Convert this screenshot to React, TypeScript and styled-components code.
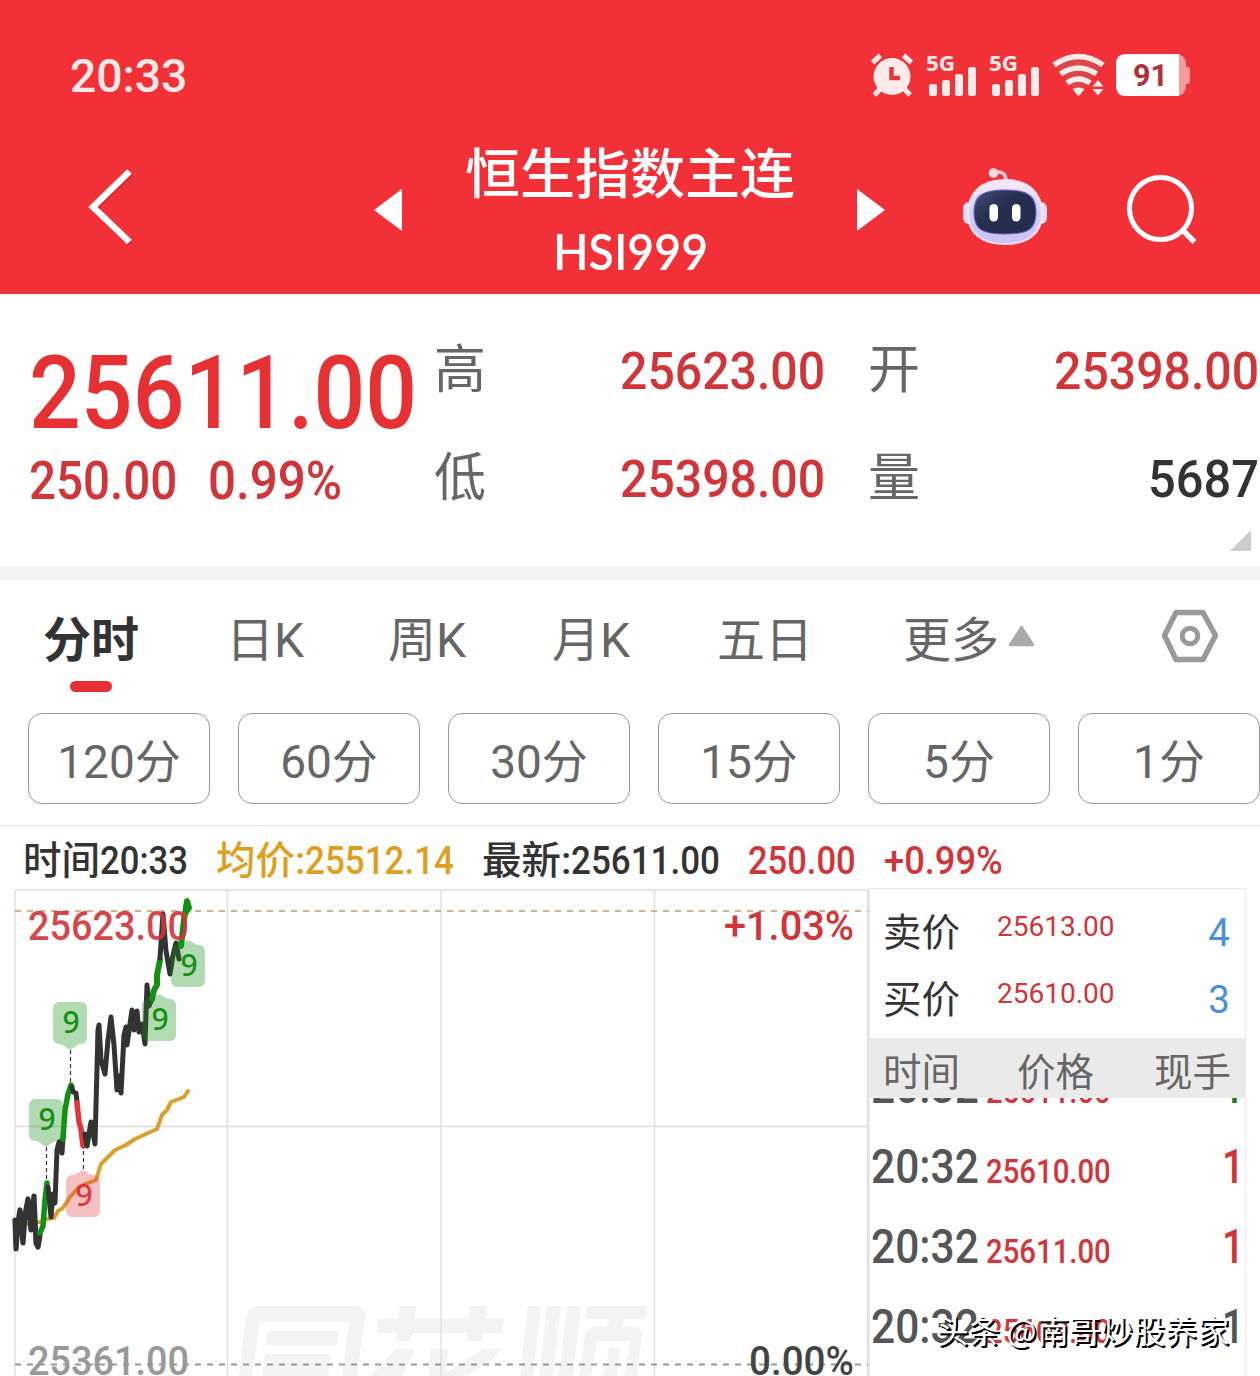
import React, { useLayoutEffect, useRef, useState } from 'react';
import styled, { createGlobalStyle } from 'styled-components';

const RED = '#e53134';
const DEEP_RED = '#d0353a';

const Global = createGlobalStyle`
  * { box-sizing: border-box; }
  body { margin: 0; background: #fff; overflow: hidden; }
`;

const Screen = styled.div`
  width: 1260px;
  height: 1376px;
  overflow: hidden;
  display: flex;
  flex-direction: column;
  background: #fefefe;
  color: #333;
  font-family: Roboto, 'Noto Sans CJK SC', sans-serif;
`;

/* Text squeezed horizontally to a fixed width, for the narrow quote digits. */
const FitBox = styled.span<{ $w: number; $size: number; $color?: string; $weight?: number; $face?: string }>`
  display: block;
  flex: none;
  width: ${p => p.$w}px;
  height: ${p => p.$size}px;
  line-height: ${p => p.$size}px;
  font-size: ${p => p.$size}px;
  font-weight: ${p => p.$weight ?? 500};
  color: ${p => p.$color ?? 'inherit'};
  ${p => p.$face && `font-family: ${p.$face}, 'Noto Sans CJK SC', sans-serif;`}
`;
const FitInner = styled.span`
  display: inline-block;
  white-space: pre;
  transform-origin: 0 50%;
`;

type FitProps = { w: number; size: number; color?: string; weight?: number; face?: string; children: string };
function Fit({ w, size, color, weight, face, children }: FitProps) {
  const ref = useRef<HTMLSpanElement>(null);
  const [scale, setScale] = useState(1);
  useLayoutEffect(() => {
    if (ref.current) setScale(w / ref.current.offsetWidth);
  }, [w, size, children]);
  return (
    <FitBox $w={w} $size={size} $color={color} $weight={weight} $face={face}>
      <FitInner ref={ref} style={{ transform: `scaleX(${scale})` }}>{children}</FitInner>
    </FitBox>
  );
}

/* ---------- header ---------- */
const Header = styled.header`
  height: 294px;
  flex: none;
  background: #f23037;
  color: #fff;
`;
const StatusBar = styled.div`
  height: 120px;
  padding: 30px 69px 0 70px;
  display: flex;
  align-items: center;
  justify-content: space-between;
`;
const StatusIcons = styled.svg`
  width: 322px;
  height: 50px;
`;
const NavBar = styled.div`
  height: 174px;
  display: grid;
  grid-template-columns: 374px 30px 452px 30px 75px 88px 76px 72px;
  align-items: start;
`;
const NavIcon = styled.svg<{ $w: number; $h: number; $top: number; $left?: number }>`
  display: block;
  width: ${p => p.$w}px;
  height: ${p => p.$h}px;
  margin: ${p => p.$top}px 0 0 ${p => p.$left ?? 0}px;
`;
const Title = styled.div`
  display: flex;
  flex-direction: column;
  align-items: center;
  padding-top: 29px;
  gap: 23px;
`;

/* ---------- quote summary ---------- */
const Summary = styled.section`
  height: 286px;
  flex: none;
  border-bottom: 14px solid #f4f4f4;
  display: grid;
  grid-template-columns: 434px 434px 392px;
  position: relative;
`;
const PriceCol = styled.div`
  padding: 48px 0 0 29px;
  display: flex;
  flex-direction: column;
`;
const ChangeRow = styled.div`
  display: flex;
  gap: 31px;
  margin-top: 11px;
`;
const StatCol = styled.div<{ $right: number }>`
  display: flex;
  flex-direction: column;
  gap: 56px;
  padding: 51px ${p => p.$right}px 0 0;
`;
const StatRow = styled.div`
  height: 52px;
  display: flex;
  align-items: center;
  justify-content: space-between;
  color: #666;
  font-size: 52px;
  line-height: 52px;
`;
const CornerMark = styled.i`
  position: absolute;
  right: 9px;
  bottom: 15px;
  border-left: 21px solid transparent;
  border-bottom: 21px solid #ccc;
`;

/* ---------- tabs ---------- */
const Tabs = styled.nav`
  height: 133px;
  flex: none;
  display: grid;
  grid-template-columns: 183px 162px 164px 165px 186px 245px 112px;
  padding: 36px 0 0 43px;
  color: #666;
  font-size: 48px;
  line-height: 50px;
`;
const Tab = styled.div<{ $active?: boolean }>`
  display: flex;
  font-weight: ${p => (p.$active ? 700 : 400)};
  color: ${p => (p.$active ? '#333' : '#666')};
  flex-direction: column;
  &::after {
    content: '';
    display: ${p => (p.$active ? 'block' : 'none')};
    width: 42px;
    height: 11px;
    margin: 15px 0 0 27px;
    border-radius: 6px;
    background: ${RED};
  }
`;
const MoreTab = styled.div`
  display: flex;
  gap: 9px;
`;
const Caret = styled.svg`
  width: 27px;
  height: 22px;
  margin-top: 9px;
`;
const Gear = styled.svg`
  width: 58px;
  height: 56px;
  margin: -8px 0 0 13px;
`;

const Periods = styled.div`
  height: 113px;
  flex: none;
  border-bottom: 1.5px solid #e6e6e6;
  padding-left: 28px;
  display: flex;
  gap: 28px;
`;
const Period = styled.div`
  flex: none;
  width: 182px;
  height: 91px;
  border: 1.3px solid #999;
  border-radius: 14px;
  text-align: center;
  line-height: 97px;
  color: #666;
  font-size: 46px;
`;

/* ---------- chart info ---------- */
const InfoRow = styled.div`
  height: 62px;
  flex: none;
  padding: 16px 0 0 23px;
  display: flex;
`;
const Gap = styled.span<{ $w: number }>`
  width: ${p => p.$w}px;
`;

const Body = styled.div`
  flex: 1;
  display: flex;
  min-height: 0;
`;
const Chart = styled.svg`
  flex: none;
  width: 868px;
  height: 488px;
  font-family: Roboto, sans-serif;
`;

/* ---------- order panel ---------- */
const Panel = styled.aside`
  width: 378px;
  flex: none;
  display: flex;
  flex-direction: column;
  border: solid #e9e9e9;
  border-width: 1px 1px 0 2px;
  position: relative;
`;
const Quotes = styled.div`
  height: 149px;
  flex: none;
  padding-top: 10px;
`;
const QuoteRow = styled.div`
  height: 67px;
  display: grid;
  grid-template-columns: 114px 1fr auto;
  padding: 0 15px 0 13px;
  line-height: 67px;
  font-size: 38.5px;
  color: #333;
`;
const QuotePrice = styled.span`
  font-size: 28px;
  line-height: 55px;
  color: ${DEEP_RED};
`;
const QuoteQty = styled.span`
  color: #4a90d9;
`;
const TradeHead = styled.div`
  height: 60px;
  flex: none;
  background: #eaeaea;
  color: #666;
  font-size: 38.5px;
  line-height: 69px;
  padding: 0 13px;
  display: grid;
  grid-template-columns: 134px 137px auto;
`;
const Trades = styled.div`
  flex: 1;
  overflow: hidden;
  display: flex;
  flex-direction: column;
  min-height: 0;
`;
const TradeRow = styled.div<{ $clipped?: boolean }>`
  height: 80px;
  flex: none;
  margin-top: ${p => (p.$clipped ? -51 : 0)}px;
  display: flex;
  align-items: flex-end;
  padding: 0 1px 16px 1px;
`;
const TradePrice = styled.span`
  margin: 0 auto 3px 7px;
`;
const Credit = styled.div`
  position: absolute;
  left: 67px;
  top: 421px;
  display: flex;
  align-items: center;
  gap: 7px;
  white-space: nowrap;
  font-family: 'Noto Sans CJK SC', sans-serif;
  font-size: 31.4px;
  line-height: 40px;
  color: #fff;
  text-shadow: 1.5px 1.5px 0 #000, 2px 2px 0 #000;
`;
const Handle = styled.span`
  letter-spacing: 0.7px;
`;

const trades = [
  { price: '25611.00', color: '#1b7f1b', clipped: true },
  { price: '25610.00', color: DEEP_RED },
  { price: '25611.00', color: DEEP_RED },
  { price: '25609.00', color: '#555' },
];

const flags = [
  { x: 70, y: 1002, tip: 'down', red: false },
  { x: 46, y: 1099, tip: 'down', red: false },
  { x: 188, y: 945, tip: 'up', red: false },
  { x: 159, y: 999, tip: 'up', red: false },
  { x: 83, y: 1175, tip: 'up', red: true },
];

function PriceChart() {
  return (
    <Chart viewBox="0 888 868 488">
      <g fill="#f3f3f3">
        <path d="M257 1306H356Q366 1308 365 1317L357 1376H342L349 1321H260L252 1376H239L246 1317Q248 1308 257 1306Z" />
        <path d="M268 1331H339L337 1345H266ZM265 1354H331L328 1376H262Z" />
        <path d="M378 1319H398L400 1306H416L414 1319H468L470 1306H487L485 1319H504L502 1333H483L481 1341H466L468 1333H413L410 1341H395L397 1333H377ZM396 1349H415L402 1376H370ZM430 1349H448L446 1376H429ZM483 1349H502L490 1361L466 1376H442Z" />
        <path d="M528 1306H541L533 1376H520ZM547 1306H561L553 1376H539ZM567 1306H581L573 1376H559Z" />
        <path d="M587 1306H647L645 1319H624L622 1327H636Q643 1329 642 1336L637 1376H624L630 1341H597L591 1376H579L585 1335Q587 1328 594 1327H607L609 1319H586ZM609 1348H620L617 1376H603Z" />
      </g>
      <g stroke="#dedede" strokeWidth="1.3" fill="none">
        <path d="M15 1376V890H868M227.5 890V1376M441 890V1376M654.500 890V1376M15 1126.500H868" />
        <path d="M867.500 890V1376" />
      </g>
      <path d="M15 911H868" stroke="#c39a5c" strokeWidth="1.6" strokeDasharray="6 6" />
      <path d="M15 1364.500H868" stroke="#999" strokeWidth="1.8" strokeDasharray="6 6" />
      <g fill="none" strokeLinejoin="round" strokeLinecap="round">
        <path stroke="#d9a02c" strokeWidth="4" d="M16 1224L28 1224L40 1222L46 1219L54 1218L58 1211L63 1208L70 1197L79 1187L88 1183L96 1180L101 1164L108 1157L115 1150L126 1145L135 1139L146 1134L157 1129L162 1115L167 1110L171 1102L184 1097L188 1091" />
        <path stroke="#333" strokeWidth="5.200" d="M15 1220L16 1249L18 1222L20 1210L23 1243L25 1215L28 1199L31 1230L34 1196L36 1243L38 1247L40 1235" />
        <path stroke="#149114" strokeWidth="5.500" d="M40 1233L43 1226L45 1200L47 1183" />
        <path stroke="#333" strokeWidth="5" d="M48 1187L51 1217L53 1194L55 1203L57 1150L59 1142L61 1141L62 1153L63 1137" />
        <path stroke="#149114" strokeWidth="5.500" d="M63 1139L65 1110L68 1094L71 1085" />
        <path stroke="#333" strokeWidth="5" d="M72 1087L73 1092L76 1093L77 1102" />
        <path stroke="#e33539" strokeWidth="5.500" d="M77 1103L79 1122L81 1129L83 1146" />
        <path stroke="#333" strokeWidth="5" d="M85 1134L87 1146L91 1122L95 1144L98 1030L99 1025L101 1060L105 1074L108 1040L111 1017L114 1045L117 1090L119 1076L121 1093L124 1035L126 1027L127 1045L130 1024L132 1010L134 1030L137 1011L139 1032L142 1024L145 1044L147 985L149 1006L152 999" />
        <path stroke="#149114" strokeWidth="6" d="M152 999L154 990L157 985L157 975L160 960" />
        <path stroke="#333" strokeWidth="5" d="M160 958L163 914L166 951L170 974L173 955L176 943L179 959" />
        <path stroke="#149114" strokeWidth="6" d="M181 946L184 920L187 901L189 908L186 912" />
      </g>
      <g stroke="#333" strokeWidth="1.200" strokeDasharray="4 3">
        <path d="M70.500 1050V1084M46.500 1147V1182M83.500 1151V1171" />
      </g>
      {flags.map(f => (
        <g key={`${f.x}-${f.y}`} fill={f.red ? '#e33539' : '#149114'}>
          <g opacity={f.red ? 0.3 : 0.32}>
            <rect x={f.x - 17} y={f.y} width="34" height="42" rx="6" />
            {f.tip === 'down'
              ? <path d={`M${f.x - 9} ${f.y + 42}h18l-9 6z`} />
              : <path d={`M${f.x - 9} ${f.y}l9 -5l9 5z`} />}
          </g>
          <text x={f.x + 1} y={f.y + 30.5} fontSize="30" fontWeight="500" fontFamily="'Noto Sans', sans-serif" textAnchor="middle">9</text>
        </g>
      ))}
      <g fontSize="40.500" fontWeight="500">
        <text x="28" y="939.500" textLength="161" lengthAdjust="spacingAndGlyphs" fill={DEEP_RED} fillOpacity=".92">25623.00</text>
        <text x="724" y="939.500" textLength="130" lengthAdjust="spacingAndGlyphs" fill={DEEP_RED}>+1.03%</text>
        <text x="28" y="1374.500" textLength="161" lengthAdjust="spacingAndGlyphs" fill="#999">25361.00</text>
        <text x="749" y="1374.500" textLength="105" lengthAdjust="spacingAndGlyphs" fill="#444">0.00%</text>
      </g>
    </Chart>
  );
}

function Status() {
  return (
    <StatusBar>
      <Fit w={117} size={47} color="#ffe8e8">20:33</Fit>
      <StatusIcons viewBox="869 50 322 50">
        <g fill="#ffeaea">
          <circle cx="892" cy="76.500" r="18.500" />
          <g stroke="#ffeaea" strokeWidth="5" strokeLinecap="butt">
            <path d="M872.500 62.500L880.500 55.500M903.500 55.500L911.500 62.500M874.500 95L881 88M910 95L903.500 88" />
          </g>
          <path d="M891.500 67V78H900" fill="none" stroke="#e8343b" strokeWidth="4.500" />
          {[0, 63].map(dx => (
            <g key={dx}>
              <text x={926 + dx} y="71" fontSize="22" fontWeight="700" fontFamily="'Noto Sans', sans-serif" textLength="29" lengthAdjust="spacingAndGlyphs">5G</text>
              <rect x={929 + dx} y="84" width="8" height="12" rx="2.500" />
              <rect x={942 + dx} y="80" width="8" height="16" rx="2.500" />
              <rect x={955 + dx} y="74" width="8" height="22" rx="2.500" />
              <rect x={968 + dx} y="67" width="8" height="29" rx="2.500" />
            </g>
          ))}
          <path d="M1054 64Q1078.500 46 1103 64L1078.500 94Z" fill="#d9474c" />
          <g fill="none" stroke="#ffeaea" strokeWidth="5.500">
            <path d="M1054 65Q1078.500 48 1103 65" />
            <path d="M1060.500 74Q1078.500 62 1096.500 74" />
            <path d="M1067 83Q1078.500 75 1090 83" />
          </g>
          <path d="M1089 88L1098 76L1107 88L1098 99Z" fill="#f23037" />
          <path d="M1072.500 89Q1078.500 86 1084.500 89L1079.500 95.500H1077.500ZM1092.500 86.500L1098 80L1103.500 86.500ZM1092.500 89L1098 95.500L1103.500 89Z" />
        </g>
        <rect x="1120" y="54" width="66" height="42" rx="9" fill="#f99a9d" />
        <rect x="1184" y="67" width="6" height="17" rx="3" fill="#f99a9d" />
        <path d="M1126 54H1179V96H1126Q1116 96 1116 86V64Q1116 54 1126 54Z" fill="#fff" />
        <text x="1133" y="85.500" fontSize="31" fontWeight="700" fill="#b0303a" fontFamily="Roboto, sans-serif" textLength="35" lengthAdjust="spacingAndGlyphs">91</text>
      </StatusIcons>
    </StatusBar>
  );
}

function Nav() {
  return (
    <NavBar>
      <NavIcon $w={50} $h={84} $top={45} $left={86} viewBox="86 165 50 84">
        <path d="M130.500 173L94.500 208.500L130.500 244" fill="none" stroke="#a01c22" strokeOpacity=".4" strokeWidth="6" />
        <path d="M129.500 171.500L93 207L129.500 242" fill="none" stroke="#fff" strokeWidth="6.500" />
      </NavIcon>
      <NavIcon $w={30} $h={44} $top={68} viewBox="374 188 30 44"><path d="M402 189V231L374 210Z" fill="#fff" /></NavIcon>
      <Title>
        <Fit w={330} size={54}>恒生指数主连</Fit>
        <Fit w={155} size={50} face="Lato" weight={600}>HSI999</Fit>
      </Title>
      <NavIcon $w={30} $h={44} $top={68} viewBox="856 188 30 44"><path d="M857 189V231L885 210Z" fill="#fff" /></NavIcon>
      <span />
      <NavIcon $w={88} $h={80} $top={46} viewBox="961 166 88 80">
        <defs>
          <linearGradient id="shell" x1="0" y1="0" x2="0" y2="1">
            <stop offset="0" stopColor="#fbe9f6" />
            <stop offset=".55" stopColor="#c9d2fa" />
            <stop offset="1" stopColor="#cfc0f2" />
          </linearGradient>
          <linearGradient id="visor" x1="0" y1="0" x2="1" y2="1">
            <stop offset="0" stopColor="#46507a" />
            <stop offset=".4" stopColor="#252f50" />
            <stop offset="1" stopColor="#212b4c" />
          </linearGradient>
        </defs>
        <circle cx="993.500" cy="173" r="4.800" fill="#fbdde9" />
        <path d="M996 172Q1006 171 1006 181" fill="none" stroke="#f9cfe0" strokeWidth="3.500" />
        <rect x="963" y="202" width="14" height="22" rx="6" fill="#eed9f3" />
        <rect x="1033" y="202" width="14" height="22" rx="6" fill="#eed9f3" />
        <path d="M1005 180C1031 180 1042 195 1042 214C1042 234 1027 244 1005 244C983 244 968 234 968 214C968 195 979 180 1005 180Z" fill="url(#shell)" stroke="#fbe3ef" strokeWidth="2" />
        <path d="M1005 190C1028 190 1036 196 1036 212C1036 229 1029 234 1005 234C981 234 974 229 974 212C974 196 982 190 1005 190Z" fill="url(#visor)" stroke="#7259c9" strokeWidth="1.200" />
        <rect x="989.500" y="204" width="8.500" height="17.500" rx="4.200" fill="#fff" />
        <rect x="1012" y="204" width="8.500" height="17.500" rx="4.200" fill="#fff" />
      </NavIcon>
      <span />
      <NavIcon $w={72} $h={72} $top={54} $left={1} viewBox="1126 174 72 72">
        <circle cx="1160.500" cy="208.500" r="31" fill="none" stroke="#fff" strokeWidth="5" />
        <path d="M1182.500 230L1194.500 242" stroke="#fff" strokeWidth="5.500" />
      </NavIcon>
    </NavBar>
  );
}

export default function App() {
  return (
    <Screen>
      <Global />
      <Header>
        <Status />
        <Nav />
      </Header>

      <Summary>
        <PriceCol>
          <Fit w={388} size={102} color={RED}>25611.00</Fit>
          <ChangeRow>
            <Fit w={148} size={53} color={DEEP_RED}>250.00</Fit>
            <Fit w={134} size={53} color={DEEP_RED}>0.99%</Fit>
          </ChangeRow>
        </PriceCol>
        <StatCol $right={43}>
          <StatRow>高<Fit w={205} size={51} color={DEEP_RED}>25623.00</Fit></StatRow>
          <StatRow>低<Fit w={205} size={51} color={DEEP_RED}>25398.00</Fit></StatRow>
        </StatCol>
        <StatCol $right={1}>
          <StatRow>开<Fit w={205} size={51} color={DEEP_RED}>25398.00</Fit></StatRow>
          <StatRow>量<Fit w={111} size={51} color="#333">5687</Fit></StatRow>
        </StatCol>
        <CornerMark />
      </Summary>

      <Tabs>
        <Tab $active>分时</Tab>
        <Tab>日K</Tab>
        <Tab>周K</Tab>
        <Tab>月K</Tab>
        <Tab>五日</Tab>
        <MoreTab>
          更多
          <Caret viewBox="0 0 27 22"><path d="M13.500 2L25 20H2Z" fill="#aaa" stroke="#aaa" strokeWidth="2.500" strokeLinejoin="round" /></Caret>
        </MoreTab>
        <Gear viewBox="1161 608 58 56">
          <path d="M1176 612.500H1203L1215.500 635.500L1203 659.500H1176L1164.500 635.500Z" fill="none" stroke="#999" strokeWidth="5.500" strokeLinejoin="round" />
          <circle cx="1190" cy="636" r="7.800" fill="none" stroke="#999" strokeWidth="5" />
        </Gear>
      </Tabs>

      <Periods>
        {['120分', '60分', '30分', '15分', '5分', '1分'].map(p => <Period key={p}>{p}</Period>)}
      </Periods>

      <InfoRow>
        <Fit w={77} size={39}>时间</Fit>
        <Fit w={88} size={39}>20:33</Fit>
        <Gap $w={28} />
        <Fit w={89} size={39} color="#dca01e">均价:</Fit>
        <Fit w={149} size={39} color="#dca01e">25512.14</Fit>
        <Gap $w={28} />
        <Fit w={89} size={39}>最新:</Fit>
        <Fit w={149} size={39}>25611.00</Fit>
        <Gap $w={28} />
        <Fit w={108} size={39} color={DEEP_RED}>250.00</Fit>
        <Gap $w={28} />
        <Fit w={119} size={39} color={DEEP_RED}>+0.99%</Fit>
      </InfoRow>

      <Body>
        <PriceChart />
        <Panel>
          <Quotes>
            <QuoteRow>卖价<QuotePrice>25613.00</QuotePrice><QuoteQty>4</QuoteQty></QuoteRow>
            <QuoteRow>买价<QuotePrice>25610.00</QuotePrice><QuoteQty>3</QuoteQty></QuoteRow>
          </Quotes>
          <TradeHead><span>时间</span><span>价格</span><span>现手</span></TradeHead>
          <Trades>
            {trades.map((t, i) => (
              <TradeRow key={i} $clipped={t.clipped}>
                <Fit w={108} size={48} color="#555">20:32</Fit>
                <TradePrice><Fit w={125} size={34} color={DEEP_RED}>{t.price}</Fit></TradePrice>
                <Fit w={22} size={48} color={t.color}>1</Fit>
              </TradeRow>
            ))}
          </Trades>
          <Credit><span>头条</span><Handle>@南哥炒股养家</Handle></Credit>
        </Panel>
      </Body>
    </Screen>
  );
}
